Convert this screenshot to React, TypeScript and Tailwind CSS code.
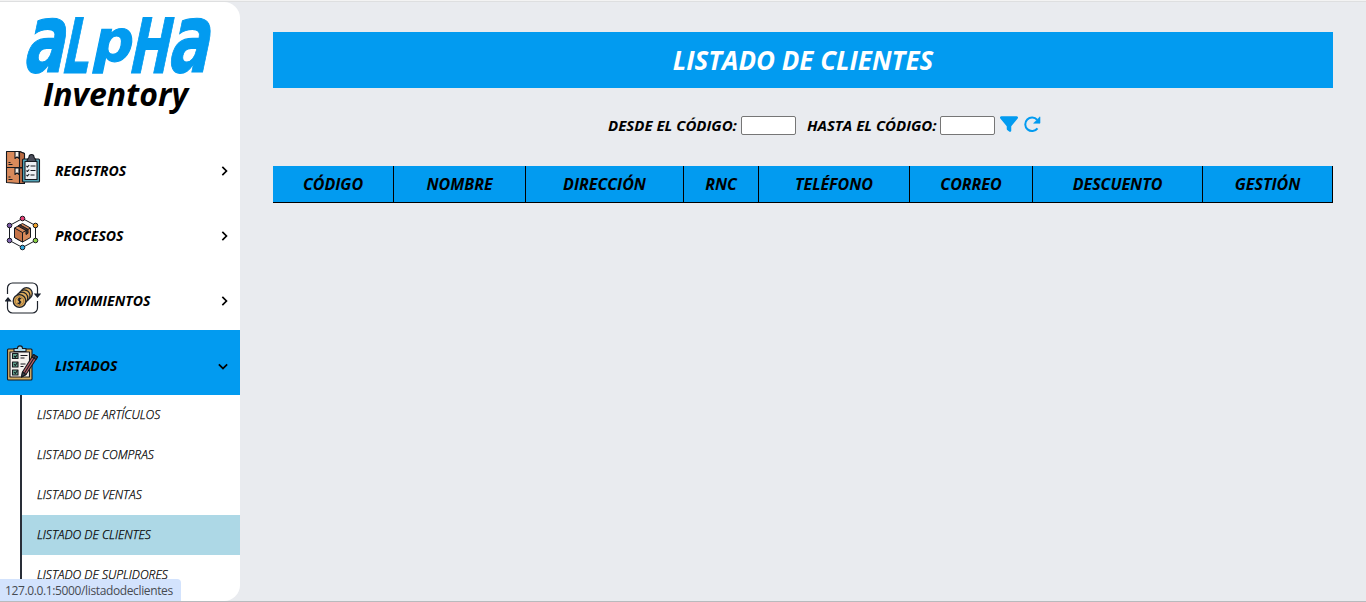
import React from "react";
import { BiChevronDown, BiChevronRight } from "react-icons/bi";
import { FaFilter } from "react-icons/fa6";

const columns = [
  { label: "CÓDIGO", width: "w-[121px]" },
  { label: "NOMBRE", width: "w-[132px]" },
  { label: "DIRECCIÓN", width: "w-[158px]" },
  { label: "RNC", width: "w-[75px]" },
  { label: "TELÉFONO", width: "w-[151px]" },
  { label: "CORREO", width: "w-[123px]" },
  { label: "DESCUENTO", width: "w-[170px]" },
  { label: "GESTIÓN", width: "w-[130px]" },
];

const submenu = [
  "LISTADO DE ARTÍCULOS",
  "LISTADO DE COMPRAS",
  "LISTADO DE VENTAS",
  "LISTADO DE CLIENTES",
  "LISTADO DE SUPLIDORES",
];

function Logo() {
  return (
    <svg width="240" height="78" viewBox="0 0 240 78" className="block shrink-0 overflow-visible">
      <g fill="#029bf0" stroke="#029bf0" strokeWidth="1.2" fontStyle="normal" fontFamily="DejaVu Sans, sans-serif" fontWeight="700">
        <text transform="matrix(.64 0 -.21 1 21.5 70)" fontSize="96">a</text>
        <text transform="matrix(.56 0 -.21 1 60 71)" fontSize="76">L</text>
        <text transform="matrix(.96 0 -.21 1 90.500 59)" fontSize="58">p</text>
        <text transform="matrix(.63 0 -.21 1 127 71)" fontSize="76">H</text>
        <text transform="matrix(.64 0 -.21 1 166 70)" fontSize="96">a</text>
      </g>
    </svg>
  );
}

function BoxesIcon() {
  return (
    <svg width="36" height="36" viewBox="0 0 36 36" stroke="#16191f" strokeWidth="1.1" strokeLinejoin="round">
      <path d="M1.500 1.500h13l5 2v30h-5l-13-1z" fill="#d98a5b" />
      <path d="M14.500 1.500l5 2v14h-5zM14.500 18h5v15.500h-5z" fill="#b96b43" />
      <path d="M1.500 17.500h18" fill="none" />
      <path d="M10 1.500h4v7l-2-1.600-2 1.600zM10 18h4v6.500l-2-1.600-2 1.600z" fill="#f5efe8" />
      <path d="M3.500 14.500h4M3.500 12.500h2M3.500 29.500h4M3.500 27h2" fill="none" />
      <rect x="17.5" y="9" width="17" height="23" rx="1" fill="#54a5b8" />
      <path d="M20 11.500h12v18H20z" fill="#edf0f4" />
      <path d="M22 11.500c0-3 2-3 2-4.500a2.500 2.500 0 015 0c0 1.500 2 1.500 2 4.500z" fill="#4a4d59" />
      <path d="M21.500 16l1 1 1.700-2M21.500 20.500l1 1 1.700-2M21.500 25l1 1 1.700-2M25.500 16h5M25.500 20.500h5M25.500 25h4" fill="none" />
    </svg>
  );
}

function ProcessIcon() {
  return (
    <svg width="36" height="36" viewBox="0 0 36 36" stroke="#16191f" strokeWidth="1" strokeLinejoin="round">
      <path d="M17.500 3.500l13 7v15l-13 7-13-7v-15z" fill="none" />
      <path d="M9.500 13l8-4.500 8 4.500v9.500l-8 4.500-8-4.500z" fill="#d98a5b" />
      <path d="M9.500 13l8 4.500v9.500l-8-4.500z" fill="#c77549" />
      <path d="M17.500 17.500l8-4.500M13 11l8 4.500v4l2-1.200v-4l-8-4.500z" fill="#4b332b" />
      <circle cx="17.5" cy="3.5" r="2.3" fill="#e83f76" />
      <circle cx="30.5" cy="10.5" r="2.3" fill="#f3a42c" />
      <circle cx="30.5" cy="25.5" r="2.3" fill="#8bd344" />
      <circle cx="17.5" cy="32.5" r="2.3" fill="#31a7df" />
      <circle cx="4.5" cy="25.5" r="2.3" fill="#8064b2" />
      <circle cx="4.5" cy="10.5" r="2.3" fill="#7b5aa6" />
    </svg>
  );
}

function CoinsIcon() {
  return (
    <svg width="36" height="36" viewBox="0 0 36 36" fill="none" stroke="#1d222b" strokeWidth="1.2">
      <path d="M2.500 14V8a5 5 0 015-5h20a5 5 0 015 5v7M32.500 21v7a5 5 0 01-5 5h-20a5 5 0 01-5-5v-8" />
      <path d="M30 14h5l-2.500 3zM.5 21h5L3 18z" fill="#172342" />
      <g fill="#dfad5d" strokeWidth="1.3">
        <circle cx="21.5" cy="13.5" r="5.8" />
        <circle cx="19.3" cy="15.7" r="5.8" />
        <circle cx="17" cy="18" r="5.8" />
        <circle cx="14.5" cy="21" r="6.3" />
      </g>
      <circle cx="14.5" cy="21" r="4.3" stroke="#8d5e25" strokeWidth=".7" />
      <path d="M16.300 18.800c-3-1.500-4.200 1.400-1.900 2.100 2.700.7 1.200 3.500-1.900 2M14.500 17.500v7" strokeWidth="1.1" />
    </svg>
  );
}

function ChecklistIcon() {
  return (
    <svg width="36" height="36" viewBox="0 0 36 36" stroke="#16191f" strokeWidth="1.1" strokeLinejoin="round">
      <rect x="2.5" y="4" width="24.5" height="31" rx="1" fill="#d5ad62" />
      <path d="M5 7h19.500v25H5z" fill="#f4f1ed" />
      <path d="M9 6.500V3.500h3.500c0-3.500 5-3.500 5 0H21v3z" fill="#a9d6e8" />
      <path d="M7.500 8.500h5.500v5H7.500zM7.500 17h5.500v5H7.500zM7.500 25h5.500v5H7.500z" fill="#62a58f" />
      <path d="M9 11l1.300 1.300L12.500 9.500M9 19l1.300 1.500L12.500 17.500M9 27l1.300 1.500L12.500 25.500M15.500 10.500h7M15.500 13h4M15.500 19h5M15.500 21.500h3" fill="none" />
      <path d="M16.500 32l1-5L28.500 9.500l4 2.500L21 29.500z" fill="#bd6268" />
      <path d="M28.500 9.500l4 2.500-1.500 2.500-4-2.500zM16.500 32l1-5 3.500 2.500z" fill="#404451" />
      <path d="M19.500 28L30 11.500" fill="none" />
    </svg>
  );
}

function ReloadIcon() {
  return (
    <svg width="18" height="18" viewBox="0 0 18 18" fill="none" stroke="#029bf0" strokeWidth="2">
      <path d="M14.200 4.800A6.800 6.800 0 1014.500 13.300" />
      <path d="M17 1.800v6.400h-6.400z" fill="#029bf0" stroke="#029bf0" strokeWidth=".6" strokeLinejoin="round" />
    </svg>
  );
}

const menu = [
  { label: "REGISTROS", icon: <BoxesIcon />, open: false },
  { label: "PROCESOS", icon: <ProcessIcon />, open: false },
  { label: "MOVIMIENTOS", icon: <CoinsIcon />, open: false },
  { label: "LISTADOS", icon: <ChecklistIcon />, open: true },
];

export default function App() {
  return (
    <div className="relative flex h-[602px] w-full flex-col overflow-hidden border-b border-[#b8babd] bg-[#e9ebef] font-['Open_Sans',sans-serif] text-black italic">
      <div className="h-0.5 shrink-0 border-b border-[#dedfe0] bg-[#f3f3f3]" />
      <div className="flex min-h-0 flex-1">
        <aside className="flex w-60 shrink-0 flex-col overflow-hidden rounded-r-[16px] bg-white">
          <header className="flex h-[133px] shrink-0 flex-col items-center">
            <Logo />
            <div className="-mt-[9px] pr-[9px] text-[32px] leading-[46px] font-bold">Inventory</div>
          </header>
          <nav>
            {menu.map((m) => (
              <button key={m.label} className={`flex h-[65px] w-full items-center pl-[5px] text-[14px] font-bold italic ${m.open ? "bg-[#029bf0]" : "bg-white"}`}>
                <span>{m.icon}</span>
                <span className="ml-[14px] pt-1.5">{m.label}</span>
                <span className="mr-1.5 ml-auto pt-1.5">
                  {m.open ? <BiChevronDown className="-translate-x-px" size={20} /> : <BiChevronRight size={20} />}
                </span>
              </button>
            ))}
            <ul className="ml-5 border-l-2 border-[#292e38]">
              {submenu.map((s) => (
                <li key={s} className={`flex h-10 items-center pl-[15px] text-[12.05px] font-light [-webkit-text-stroke:0.25px_black] ${s === "LISTADO DE CLIENTES" ? "bg-[#add8e6]" : ""}`}>{s}</li>
              ))}
            </ul>
          </nav>
        </aside>
        <main className="flex-1 px-[33px] pt-[30px]">
          <h1 className="flex h-14 items-center justify-center bg-[#029bf0] text-[26px] font-bold text-white">LISTADO DE CLIENTES</h1>
          <form className="mt-[28px] flex h-[19px] items-center pl-[335px] text-[15px] font-bold">
            <label className="flex items-center gap-1">
              <span className="w-[129px] pb-px whitespace-nowrap">DESDE EL CÓDIGO:</span>
              <input className="h-[19px] w-[55px] rounded-[2px] border border-[#767676] bg-white" />
            </label>
            <label className="ml-[11px] flex items-center gap-1">
              <span className="w-[129px] pb-px whitespace-nowrap">HASTA EL CÓDIGO:</span>
              <input className="h-[19px] w-[55px] rounded-[2px] border border-[#767676] bg-white" />
            </label>
            <FaFilter className="mb-[3px] ml-[5px] text-[#029bf0]" size={18} />
            <span className="mb-[3px] ml-[5px]"><ReloadIcon /></span>
          </form>
          <table className="mt-[31px] w-[1060px] table-fixed border-separate border-spacing-0">
            <thead>
              <tr className="h-[37px] bg-[#029bf0] text-[16px]">
                {columns.map((c) => (
                  <th key={c.label} className={`border-r border-b border-black p-0 font-bold ${c.width}`}>{c.label}</th>
                ))}
              </tr>
            </thead>
          </table>
        </main>
      </div>
      <div className="absolute bottom-0 left-0 flex h-[22px] w-[181px] items-center rounded-tr bg-[#d3e3fd] pt-0.5 pl-[5px] font-['Open_Sans',sans-serif] text-[12px] tracking-[-0.37px] whitespace-nowrap text-[#474b52] not-italic">127.0.0.1:5000/listadodeclientes</div>
    </div>
  );
}
